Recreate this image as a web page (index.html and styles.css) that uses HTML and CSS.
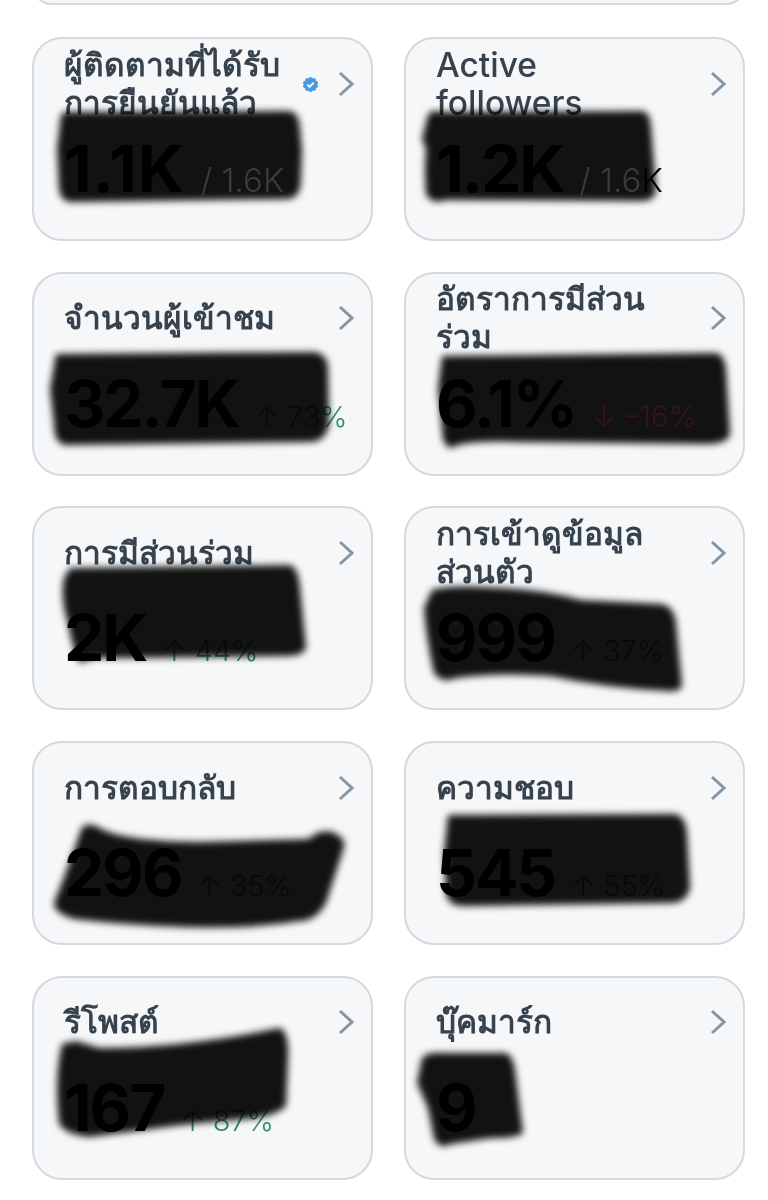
FILE: index.html
```html
<!DOCTYPE html>
<html lang="en">
<head>
<meta charset="UTF-8">
<meta name="viewport" content="width=device-width, initial-scale=1.0">
<title>Account analytics</title>
<link rel="stylesheet" href="styles.css">
</head>
<body>

<div class="top-card"></div>

<div class="grid">

    <div class="card">
        <div class="head">
            <span class="title">ผู้ติดตามที่ได้รับการยืนยันแล้ว</span>
            <svg class="badge" viewBox="0 0 24 24"><path fill="#4a99e0" d="M12 1l3 2.2 3.7-.1 1.100 3.500 3 2.200L21.700 12l1.100 3.200-3 2.200-1.100 3.500-3.700-.1L12 23l-3-2.200-3.700.1-1.100-3.500-3-2.200L2.300 12 1.200 8.800l3-2.200 1.100-3.500 3.700.1z"/><path fill="none" stroke="#fff" stroke-width="2.600" d="M7.500 12.200l3.200 3.200 5.800-6.200"/></svg>
            <svg class="chevron" viewBox="0 0 16 26"><path d="M2 2l12 11L2 24"/></svg>
        </div>
        <div class="value"><span class="num wide">1.1K</span><span class="sub over">/ 1.6K</span></div>
        <svg class="scribble" viewBox="0 0 339 200"><path d="M27 76 Q30 71 40 73 L255 72 Q265 73 266 90 L268 112 L267 135 Q268 158 255 160 L40 163 Q27 164 25 150 L23 110Z"/></svg>
    </div>

    <div class="card">
        <div class="head">
            <span class="title latin">Active<br>followers</span>
            <svg class="chevron" viewBox="0 0 16 26"><path d="M2 2l12 11L2 24"/></svg>
        </div>
        <div class="value"><span class="num">1.2K</span><span class="sub over">/ 1.6<span class="outside">K</span></span></div>
        <svg class="scribble" viewBox="0 0 339 200"><path d="M22 76 Q25 70 35 73 L235 72 Q244 72 245 88 L250 150 Q250 162 235 162 L40 161 Q25 166 20 155 Q18 130 20 110 L16 100Z"/></svg>
    </div>

    <div class="card">
        <div class="head">
            <span class="title">จำนวนผู้เข้าชม</span>
            <svg class="chevron" viewBox="0 0 16 26"><path d="M2 2l12 11L2 24"/></svg>
        </div>
        <div class="value"><span class="num">32.7K</span><span class="sub up">↑ 73%</span></div>
        <svg class="scribble" viewBox="0 0 339 200"><path d="M22 80 L280 78 Q294 80 294 95 L295 150 Q292 168 275 168 L32 171 Q20 170 20 150 L16 115Z"/></svg>
    </div>

    <div class="card">
        <div class="head">
            <span class="title">อัตราการมีส่วนร่วม</span>
            <svg class="chevron" viewBox="0 0 16 26"><path d="M2 2l12 11L2 24"/></svg>
        </div>
        <div class="value"><span class="num">6.1%</span><span class="sub over down">↓ -16%</span></div>
        <svg class="scribble" viewBox="0 0 339 200"><path d="M36 82 L310 79 Q318 80 320 95 L324 160 Q322 170 300 170 L110 168 Q60 166 45 174 Q36 172 36 155 L32 115Z"/></svg>
    </div>

    <div class="card">
        <div class="head">
            <span class="title">การมีส่วนร่วม</span>
            <svg class="chevron" viewBox="0 0 16 26"><path d="M2 2l12 11L2 24"/></svg>
        </div>
        <div class="value"><span class="num">2K</span><span class="sub up">↑ 44%</span></div>
        <svg class="scribble" viewBox="0 0 339 200"><path d="M36 60 L255 57 Q264 58 266 80 L272 140 Q268 149 250 148 L100 150 L60 150 L46 155 Q38 140 34 115 Q26 90 30 70Z"/></svg>
    </div>

    <div class="card">
        <div class="head">
            <span class="title">การเข้าดูข้อมูลส่วนตัว</span>
            <svg class="chevron" viewBox="0 0 16 26"><path d="M2 2l12 11L2 24"/></svg>
        </div>
        <div class="value"><span class="num">999</span><span class="sub up">↑ 37%</span></div>
        <svg class="scribble" viewBox="0 0 339 200"><path d="M26 82 Q45 76 95 80 Q140 82 175 92 L255 96 Q268 98 270 115 L276 178 Q274 184 262 183 Q200 180 144 168 Q90 164 50 170 Q36 176 28 165 Q20 130 18 100Z"/></svg>
    </div>

    <div class="card">
        <div class="head">
            <span class="title">การตอบกลับ</span>
            <svg class="chevron" viewBox="0 0 16 26"><path d="M2 2l12 11L2 24"/></svg>
        </div>
        <div class="value"><span class="num">296</span><span class="sub up">↑ 35%</span></div>
        <svg class="scribble" viewBox="0 0 339 200"><path d="M48 84 Q56 79 64 84 Q85 98 165 99 L275 96 Q285 86 298 89 Q312 94 310 104 L292 160 Q282 178 265 178 Q220 186 150 184 Q90 182 40 176 Q20 170 20 160 Q36 120 48 84Z"/></svg>
    </div>

    <div class="card">
        <div class="head">
            <span class="title">ความชอบ</span>
            <svg class="chevron" viewBox="0 0 16 26"><path d="M2 2l12 11L2 24"/></svg>
        </div>
        <div class="value"><span class="num">545</span><span class="sub up">↑ 55%</span></div>
        <svg class="scribble" viewBox="0 0 339 200"><path d="M42 72 L270 71 Q280 75 281 90 L284 145 Q280 160 265 160 L60 163 Q42 164 40 150 L38 110 Z"/></svg>
    </div>

    <div class="card">
        <div class="head">
            <span class="title">รีโพสต์</span>
            <svg class="chevron" viewBox="0 0 16 26"><path d="M2 2l12 11L2 24"/></svg>
        </div>
        <div class="value"><span class="num">167</span><span class="sub up">↑ 87%</span></div>
        <svg class="scribble" viewBox="0 0 339 200"><path d="M28 66 L42 63 L65 70 Q150 70 245 50 Q255 52 254 80 L252 128 Q240 140 200 142 Q150 146 110 152 L55 159 Q30 156 25 145 Q20 100 28 66Z"/></svg>
    </div>

    <div class="card">
        <div class="head">
            <span class="title">บุ๊คมาร์ก</span>
            <svg class="chevron" viewBox="0 0 16 26"><path d="M2 2l12 11L2 24"/></svg>
        </div>
        <div class="value"><span class="num">9</span></div>
        <svg class="scribble" viewBox="0 0 339 200"><path d="M16 80 Q22 74 35 75 L100 75 Q108 78 110 100 L117 155 Q112 160 85 160 L45 166 Q32 172 28 160 L22 130 L11 105Z"/></svg>
    </div>

</div>

</body>
</html>
```

FILE: styles.css
```css
body {
    margin: 0;
    background: #fff;
    font-family: Inter, "Liberation Sans", "Noto Sans", sans-serif;
    overflow: hidden;
}
.top-card {
    height: 36px;
    margin: -31px 23px 0 33px;
    border: 2px solid #d3d9df;
    border-radius: 30px;
    background: #f5f7f8;
    box-sizing: border-box;
}
.grid {
    display: grid;
    grid-template-columns: 341px 341px;
    grid-auto-rows: 204px;
    column-gap: 31px;
    row-gap: 30.700px;
    padding: 32px 0 0 32px;
}
.card {
    position: relative;
    box-sizing: border-box;
    padding: 7px 17px 0 30px;
    border: 2px solid #d3d9df;
    border-radius: 30px;
    background: #f5f7f8;
    overflow: hidden;
}
.head {
    display: flex;
    align-items: center;
    height: 75px;
}
.title {
    width: 238px;
    font-size: 31.600px;
    font-weight: 600;
    line-height: 38px;
    color: #36424d;
}
.latin {
    font-size: 33.500px;
    font-weight: 500;
}
.badge {
    width: 17px;
    height: 17px;
    margin-top: 2px;
}
.chevron {
    width: 16px;
    height: 26px;
    margin-left: auto;
    fill: none;
    stroke: #8496a8;
    stroke-width: 3;
}
.value {
    display: flex;
    align-items: baseline;
    margin-top: 9px;
}
.num {
    font-size: 64px;
    font-weight: 700;
    letter-spacing: -2px;
    color: #000;
}
.wide {
    letter-spacing: 1px;
}
.sub {
    margin-left: 16px;
    font-size: 29px;
    font-weight: 300;
    color: #555;
}
.up {
    color: #2f8a63;
}
.over {
    position: relative;
    z-index: 1;
    font-size: 33px;
    color: #3c3c3c;
}
.over.down {
    font-size: 30px;
    color: #3a1414;
}
.outside {
    color: #000;
}
.scribble {
    position: absolute;
    left: 0;
    top: 0;
    width: 339px;
    height: 200px;
    mix-blend-mode: multiply;
    fill: #121212;
    filter: blur(3.500px);
}
```
